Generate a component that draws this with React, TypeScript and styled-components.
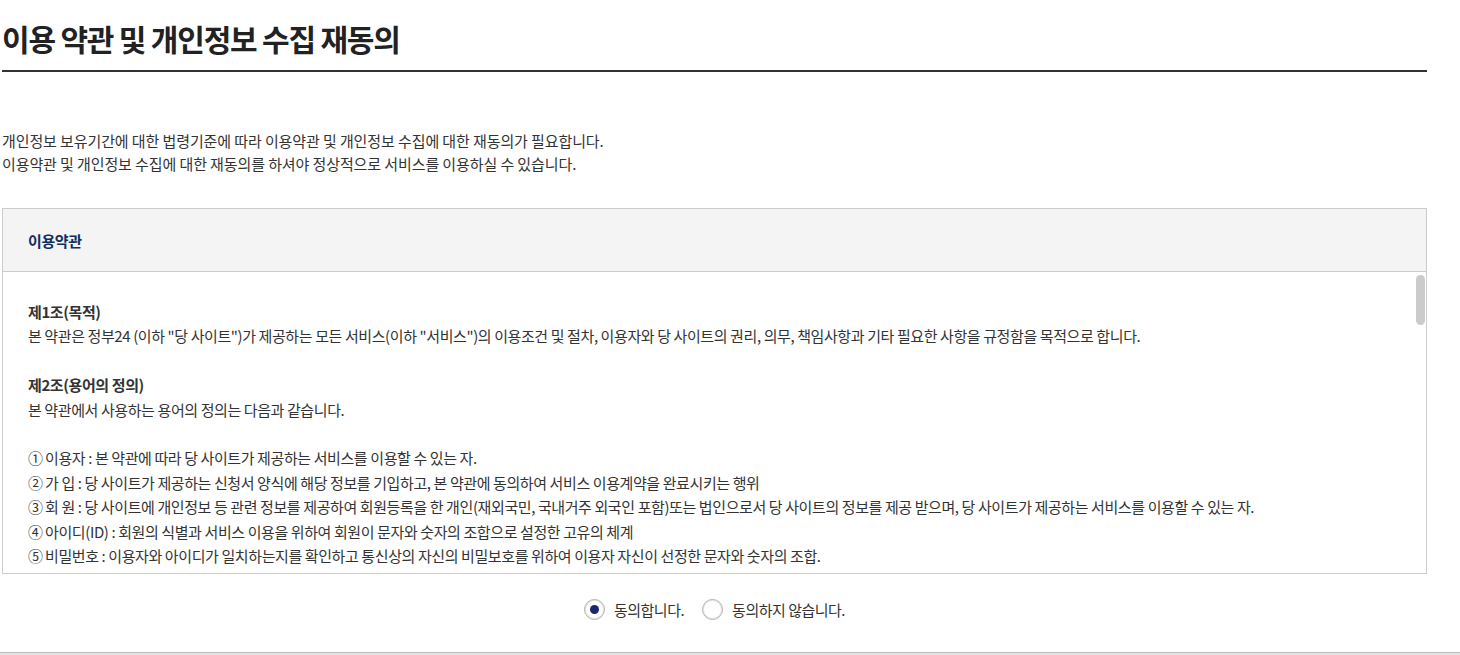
import React, { useState } from "react";
import styled, { createGlobalStyle } from "styled-components";

const Global = createGlobalStyle`
  html, body { margin: 0; padding: 0; background: #fff; }
  body { font-family: "Noto Sans CJK KR", "Noto Sans", sans-serif; color: #333; }
  * { box-sizing: border-box; }
`;

const Page = styled.div`
  width: 1460px;
  height: 655px;
  display: flex;
  flex-direction: column;
  overflow: hidden;
`;

const Main = styled.main`
  width: 1425px;
  margin-left: 2px;
  flex: 1;
`;

const Title = styled.h1`
  margin: 0;
  padding-top: 18px;
  height: 72px;
  font-size: 30px;
  font-weight: 700;
  letter-spacing: -1.2px;
  line-height: 40px;
  color: #222;
  border-bottom: 2px solid #333;
`;

const Intro = styled.p`
  margin: 57px 0 0;
  font-size: 15px;
  line-height: 23px;
  letter-spacing: -0.1px;
  color: #333;
`;

const TermsBox = styled.section`
  margin-top: 33px;
  border: 1px solid #ccc;
`;

const TermsHeader = styled.div`
  height: 63px;
  background: #f4f4f4;
  border-bottom: 1px solid #ccc;
  display: flex;
  align-items: center;
  padding-left: 25px;
  font-size: 15px;
  font-weight: 700;
  letter-spacing: -0.4px;
  color: #10305f;
`;

const BodyWrap = styled.div`
  position: relative;
`;

const TermsBody = styled.div`
  height: 301px;
  overflow-y: scroll;
  padding: 28px 25px 20px;
  font-size: 15px;
  line-height: 24.4px;
  letter-spacing: -0.4px;
  color: #333;
  scrollbar-width: none;
  &::-webkit-scrollbar { display: none; }
`;

const ScrollThumb = styled.div`
  position: absolute;
  top: 3px;
  right: 1px;
  width: 9px;
  height: 50px;
  border-radius: 5px;
  background: #cbcbcb;
`;

const Article = styled.div`
  margin-bottom: 24.4px;
`;

const ArticleTitle = styled.div`
  font-weight: 700;
  color: #333;
`;

const Line = styled.div``;

const Num = styled.span`
  letter-spacing: 0;
  margin-right: 2px;
`;

const RadioRow = styled.div`
  display: flex;
  justify-content: center;
  align-items: center;
  gap: 18px;
  margin-top: 25px;
`;

const RadioLabel = styled.label`
  display: flex;
  align-items: center;
  gap: 9px;
  font-size: 15px;
  letter-spacing: -0.5px;
  color: #333;
  cursor: pointer;
`;

const RadioCircle = styled.span<{ $on: boolean }>`
  width: 21px;
  height: 21px;
  border-radius: 50%;
  border: 1px solid #b0b0b0;
  background: #fff;
  display: flex;
  align-items: center;
  justify-content: center;
  box-shadow: inset 0 0 0 1px #e4e4e4;
  &::after {
    content: "";
    width: 9px;
    height: 9px;
    border-radius: 50%;
    background: ${(p) => (p.$on ? "#1c2473" : "transparent")};
  }
`;

const Footer = styled.footer`
  height: 3px;
  border-top: 1px solid #bbb;
  background: #e4e4e4;
`;

const definitions: [string, string][] = [
  ["①", "이용자 : 본 약관에 따라 당 사이트가 제공하는 서비스를 이용할 수 있는 자."],
  ["②", "가 입 : 당 사이트가 제공하는 신청서 양식에 해당 정보를 기입하고, 본 약관에 동의하여 서비스 이용계약을 완료시키는 행위"],
  ["③", "회 원 : 당 사이트에 개인정보 등 관련 정보를 제공하여 회원등록을 한 개인(재외국민, 국내거주 외국인 포함)또는 법인으로서 당 사이트의 정보를 제공 받으며, 당 사이트가 제공하는 서비스를 이용할 수 있는 자."],
  ["④", "아이디(ID) : 회원의 식별과 서비스 이용을 위하여 회원이 문자와 숫자의 조합으로 설정한 고유의 체계"],
  ["⑤", "비밀번호 : 이용자와 아이디가 일치하는지를 확인하고 통신상의 자신의 비밀보호를 위하여 이용자 자신이 선정한 문자와 숫자의 조합."],
  ["⑥", "탈 퇴 : 회원이 이용계약을 종료시키는 행위"],
];

const App: React.FC = () => {
  const [agree, setAgree] = useState(true);
  return (
    <Page>
      <Global />
      <Main>
        <Title>이용 약관 및 개인정보 수집 재동의</Title>
        <Intro>
          개인정보 보유기간에 대한 법령기준에 따라 이용약관 및 개인정보 수집에 대한 재동의가 필요합니다.
          <br />
          이용약관 및 개인정보 수집에 대한 재동의를 하셔야 정상적으로 서비스를 이용하실 수 있습니다.
        </Intro>
        <TermsBox>
          <TermsHeader>이용약관</TermsHeader>
          <BodyWrap>
            <TermsBody>
              <Article>
                <ArticleTitle>제1조(목적)</ArticleTitle>
                <Line>
                  본 약관은 정부24 (이하 "당 사이트")가 제공하는 모든 서비스(이하 "서비스")의 이용조건 및 절차, 이용자와 당 사이트의 권리, 의무, 책임사항과 기타 필요한 사항을 규정함을 목적으로 합니다.
                </Line>
              </Article>
              <Article>
                <ArticleTitle>제2조(용어의 정의)</ArticleTitle>
                <Line>본 약관에서 사용하는 용어의 정의는 다음과 같습니다.</Line>
              </Article>
              <Article>
                {definitions.map(([n, t]) => (
                  <Line key={n}>
                    <Num>{n}</Num>
                    {t}
                  </Line>
                ))}
              </Article>
              <Article>
                <ArticleTitle>제3조(약관의 효력과 변경)</ArticleTitle>
                <Line>
                  <Num>①</Num> 당 사이트는 이용자가 본 약관 내용에 동의하는 것을 조건으로 이용자에게 서비스를 제공할 것이며, 이용자가 본 약관의 내용에 동의하는 경우, 당 사이트의 서비스 제공 행위 및 이용자의 서비스 사용 행위에는 본 약관이 우선적으로 적용될 것입니다.
                </Line>
              </Article>
            </TermsBody>
            <ScrollThumb />
          </BodyWrap>
        </TermsBox>
        <RadioRow>
          <RadioLabel onClick={() => setAgree(true)}>
            <RadioCircle $on={agree} />
            동의합니다.
          </RadioLabel>
          <RadioLabel onClick={() => setAgree(false)}>
            <RadioCircle $on={!agree} />
            동의하지 않습니다.
          </RadioLabel>
        </RadioRow>
      </Main>
      <Footer />
    </Page>
  );
};

export default App;
